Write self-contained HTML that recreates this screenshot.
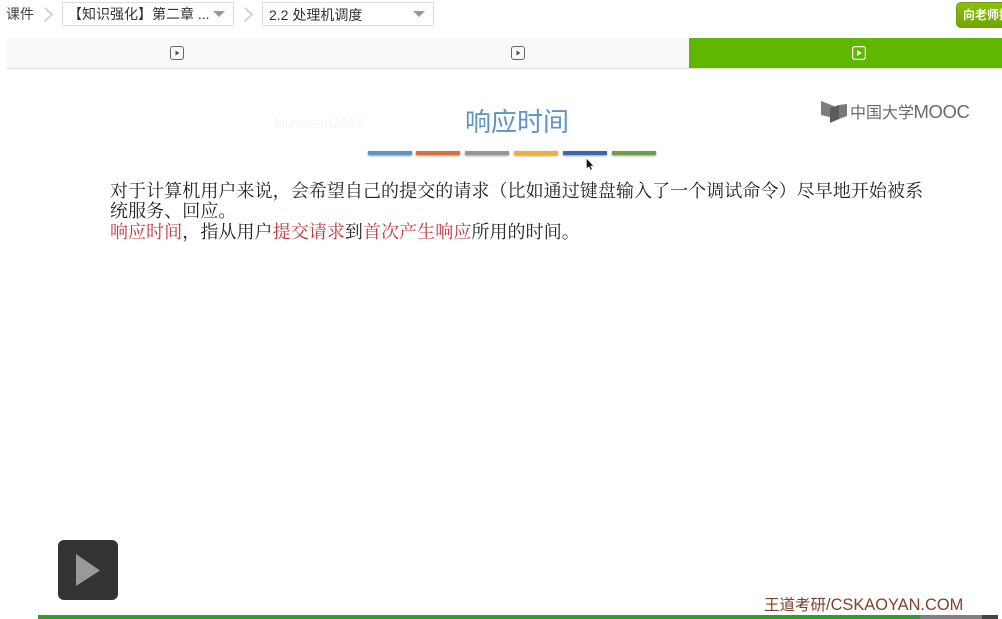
<!DOCTYPE html>
<html lang="zh">
<head>
<meta charset="utf-8">
<style>
html,body{margin:0;padding:0;background:#fff;}
body{width:1002px;height:619px;position:relative;overflow:hidden;font-family:"Liberation Sans","Noto Sans CJK SC",sans-serif;}
.a{position:absolute;white-space:nowrap;}
.sel{position:absolute;top:2px;height:22px;border:1px solid #ddd;background:#fff;font-size:14px;line-height:24px;color:#333;white-space:nowrap;}
.tri{position:absolute;width:0;height:0;border-left:6px solid transparent;border-right:6px solid transparent;border-top:6px solid #999;top:8px;}
.bar{position:absolute;top:151px;height:4px;width:44px;box-shadow:0 1px 2px rgba(0,0,0,.4);}
.serif{font-family:"Liberation Serif","Noto Serif CJK SC",serif;font-size:18px;color:#222;line-height:20.5px;letter-spacing:.07px;filter:blur(.25px);}
.r{color:#c0393f;}
</style>
</head>
<body>
<div class="a" style="left:6px;top:5px;font-size:14px;line-height:18px;color:#444;">课件</div>
<svg class="a" style="left:43px;top:7px" width="12" height="15"><path d="M2 1l7 6.500-7 6.500" fill="none" stroke="#ccc" stroke-width="1.6"/></svg>
<div class="sel" style="left:62px;width:170px;"><span style="position:absolute;left:5px;top:-1px;">【知识强化】第二章 ...</span><div class="tri" style="left:150px;"></div></div>
<svg class="a" style="left:243px;top:7px" width="12" height="15"><path d="M2 1l7 6.500-7 6.500" fill="none" stroke="#ccc" stroke-width="1.6"/></svg>
<div class="sel" style="left:262px;width:170px;"><span style="position:absolute;left:6px;top:0;">2.2 处理机调度</span><div class="tri" style="left:150px;"></div></div>
<div class="a" style="left:956px;top:2px;width:60px;height:26px;border-radius:5px;background:linear-gradient(#8cc00a,#6fa600);border:1px solid #6b9e10;box-sizing:border-box;color:#fff;font-size:12px;font-weight:bold;line-height:24px;padding-left:6px;">向老师提问</div>

<div class="a" style="left:7px;top:38px;width:682px;height:30px;background:#f9f9f9;border-radius:3px 0 0 0;"></div>
<div class="a" style="left:7px;top:68px;width:995px;height:1px;background:#ddd;"></div>
<div class="a" style="left:689px;top:38px;width:313px;height:30px;background:#60b700;"></div>
<svg class="a" style="left:170px;top:46px" width="14" height="14"><rect x=".5" y=".5" width="13" height="13" rx="2.500" fill="none" stroke="#666"/><path d="M5.500 4.500l4 2.500-4 2.500z" fill="#555"/></svg>
<svg class="a" style="left:511px;top:46px" width="14" height="14"><rect x=".5" y=".5" width="13" height="13" rx="2.500" fill="none" stroke="#666"/><path d="M5.500 4.500l4 2.500-4 2.500z" fill="#555"/></svg>
<svg class="a" style="left:852px;top:46px" width="14" height="14"><rect x=".6" y=".6" width="12.800" height="12.800" rx="2.500" fill="none" stroke="#fff" stroke-width="1.200"/><path d="M5.200 4l4.600 3-4.600 3z" fill="#fff"/></svg>

<svg class="a" style="left:820px;top:100px" width="28" height="24"><path d="M1 1l13 5v12l-13-3z" fill="#7d7d7d"/><path d="M10 8l9-3v14l-9 4z" fill="#5c5c5e"/><path d="M19 5l8-1v12l-8 3z" fill="#77777a"/></svg>
<div class="a" style="left:850px;top:100px;line-height:24px;color:#6a6a6a;font-size:16px;">中国大学<span style="font-size:18.500px;letter-spacing:-.4px;position:relative;left:-.5px;">MOOC</span></div>

<div class="a" style="left:274px;top:115px;font-size:14px;line-height:16px;color:#f5f5f5;">blueheart2019</div>
<div class="a" style="left:465px;top:107px;font-size:26px;line-height:30px;color:#5f93c4;">响应时间</div>

<div class="bar" style="left:368px;background:#5b93cb;"></div>
<div class="bar" style="left:416px;background:#d8703a;"></div>
<div class="bar" style="left:465px;background:#979797;"></div>
<div class="bar" style="left:514px;background:#f0ae3a;"></div>
<div class="bar" style="left:563px;background:#3d65ae;"></div>
<div class="bar" style="left:612px;background:#6d9d48;"></div>
<svg class="a" style="left:586px;top:158px" width="9" height="13"><path d="M.5.500v10l2.500-2 1.600 3.500 1.600-.8L4.600 8H7.600z" fill="#111" stroke="#fff" stroke-width=".4"/></svg>

<div class="a serif" style="left:110px;top:181px;">对于计算机用户来说，会希望自己的提交的请求（比如通过键盘输入了一个调试命令）尽早地开始被系</div>
<div class="a serif" style="left:110px;top:201px;">统服务、回应。</div>
<div class="a serif" style="left:110px;top:222px;"><span class="r">响应时间</span>，指从用户<span class="r">提交请求</span>到<span class="r">首次产生响应</span>所用的时间。</div>

<div class="a" style="left:58px;top:540px;width:60px;height:60px;background:#333;border-radius:6px;"></div>
<svg class="a" style="left:76px;top:554px" width="25" height="33"><path d="M0 0L24 16.500 0 32z" fill="#999"/></svg>

<div class="a" style="left:764px;top:596px;font-size:15.500px;line-height:18px;color:#80402c;">王道考研<span style="font-size:16.400px;">/CSKAOYAN.COM</span></div>
<div class="a" style="left:38px;top:615px;width:882px;height:4px;background:#2ca02c;"></div>
<div class="a" style="left:920px;top:615px;width:62px;height:4px;background:#808080;"></div>
<div class="a" style="left:982px;top:615px;width:16px;height:4px;background:#444;"></div>
</body>
</html>
